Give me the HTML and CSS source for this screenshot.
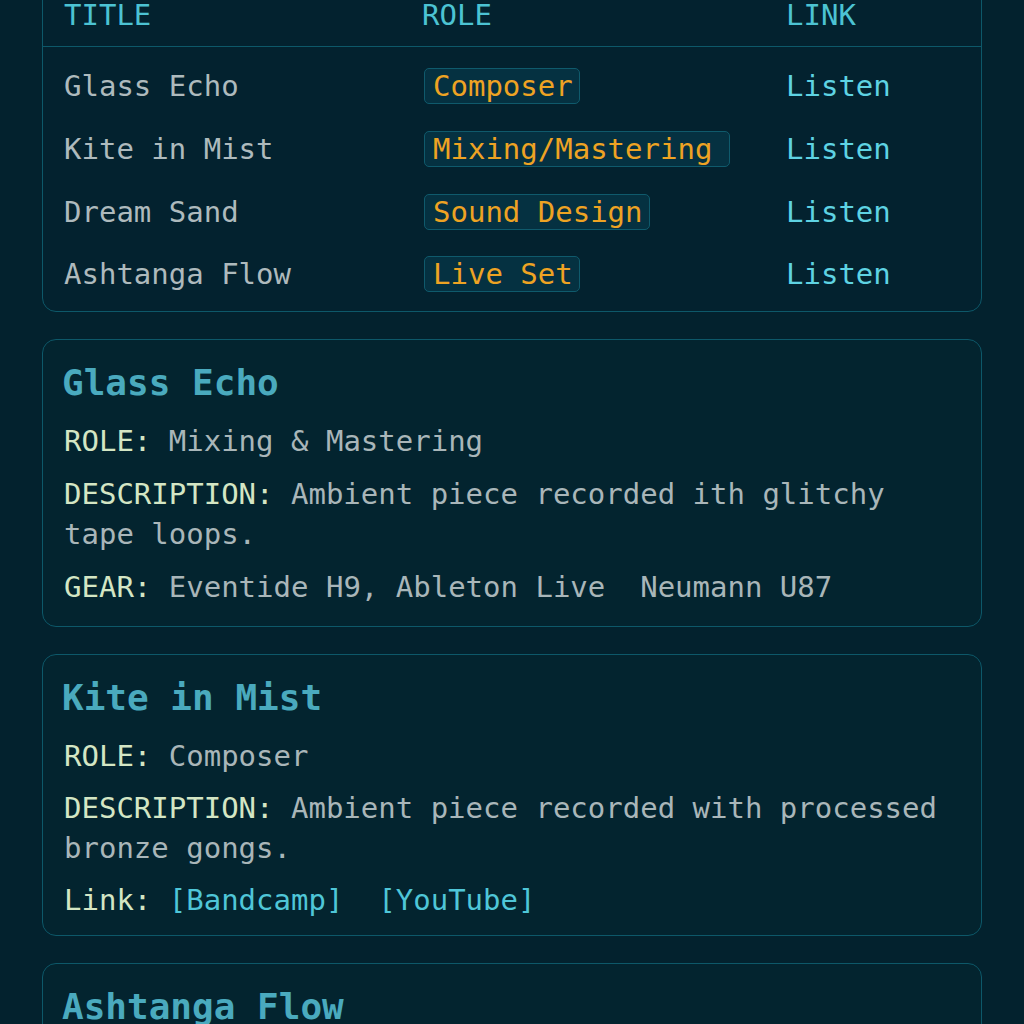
FILE: index.html
```html
<!DOCTYPE html>
<html lang="en">
<head>
<meta charset="utf-8">
<title>Projects</title>
<link rel="stylesheet" href="styles.css">
</head>
<body>
<main class="page">
  <section class="table-card">
    <div class="trow thead">
      <div class="cell">TITLE</div>
      <div class="cell">ROLE</div>
      <div class="cell">LINK</div>
    </div>
    <div class="tbody">
      <div class="trow">
        <div class="cell title">Glass Echo</div>
        <div class="cell"><span class="badge">Composer</span></div>
        <div class="cell"><a class="listen" href="#">Listen</a></div>
      </div>
      <div class="trow">
        <div class="cell title">Kite in Mist</div>
        <div class="cell"><span class="badge badge-wide">Mixing/Mastering</span></div>
        <div class="cell"><a class="listen" href="#">Listen</a></div>
      </div>
      <div class="trow">
        <div class="cell title">Dream Sand</div>
        <div class="cell"><span class="badge">Sound Design</span></div>
        <div class="cell"><a class="listen" href="#">Listen</a></div>
      </div>
      <div class="trow">
        <div class="cell title">Ashtanga Flow</div>
        <div class="cell"><span class="badge">Live Set</span></div>
        <div class="cell"><a class="listen" href="#">Listen</a></div>
      </div>
    </div>
  </section>

  <article class="card">
    <h2 class="card-title">Glass Echo</h2>
    <p class="field"><span class="label">ROLE:</span> <span class="value">Mixing &amp; Mastering</span></p>
    <p class="field"><span class="label">DESCRIPTION:</span> <span class="value">Ambient piece recorded ith glitchy tape loops.</span></p>
    <p class="field"><span class="label">GEAR:</span> <span class="value">Eventide H9, Ableton Live&nbsp; Neumann U87</span></p>
  </article>

  <article class="card card-tight">
    <h2 class="card-title">Kite in Mist</h2>
    <p class="field"><span class="label">ROLE:</span> <span class="value">Composer</span></p>
    <p class="field"><span class="label">DESCRIPTION:</span> <span class="value">Ambient piece recorded with processed bronze gongs.</span></p>
    <p class="field"><span class="label">Link:</span> <a class="ext" href="#">[Bandcamp]</a>&nbsp; <a class="ext" href="#">[YouTube]</a></p>
  </article>

  <article class="card">
    <h2 class="card-title">Ashtanga Flow</h2>
    <p class="field"><span class="label">ROLE:</span> <span class="value">Live Set</span></p>
  </article>
</main>
</body>
</html>
```
FILE: styles.css
```css
* { box-sizing: border-box; }

html, body {
  margin: 0;
  padding: 0;
  background: #03222e;
}

body {
  font-family: "DejaVu Sans Mono", "Liberation Mono", monospace;
  font-size: 29px;
  color: #a9b6b9;
  overflow: hidden;
  height: 1024px;
}

.page {
  margin: -32px 42px 0 42px;
  display: flex;
  flex-direction: column;
  gap: 27px;
}

.table-card {
  border: 1.5px solid #0d5869;
  border-radius: 14px;
  background: #03222f;
}

.trow {
  display: grid;
  grid-template-columns: 358px 364px 1fr;
  padding-left: 21px;
  align-items: center;
}

.thead {
  height: 78px;
  padding-top: 14px;
  border-bottom: 1.5px solid #0d5869;
  color: #4cc3d3;
}

.tbody {
  padding: 8px 0 5px;
}

.tbody .trow {
  height: 62.7px;
}

.title {
  color: #aebabd;
}

.badge {
  display: inline-block;
  color: #eea323;
  background: #053141;
  border: 1.5px solid #0f5a6c;
  border-radius: 5px;
  padding: 0 6px 0 8px;
  line-height: 34px;
  margin-left: 2px;
}

.badge-wide {
  padding-right: 17px;
}

.listen {
  color: #5ed3e3;
  text-decoration: none;
}

.card {
  border: 1.5px solid #0d5869;
  border-radius: 14px;
  background: #03242f;
  padding: 18px 21px 19px;
}

.card-tight {
  padding-bottom: 15px;
}

.card-tight .field {
  margin-bottom: 12px;
}

.card-title {
  margin: 0 0 13px -2px;
  font-size: 36px;
  font-weight: bold;
  line-height: 50px;
  color: #4aaabe;
}

.field {
  margin: 0 0 13px;
  line-height: 40px;
}

.field:last-child,
.card-tight .field:last-child {
  margin-bottom: 0;
}

.label {
  color: #d4e6c4;
}

.value {
  color: #a9b6b9;
}

.ext {
  color: #4fc6d8;
  text-decoration: none;
}
```
